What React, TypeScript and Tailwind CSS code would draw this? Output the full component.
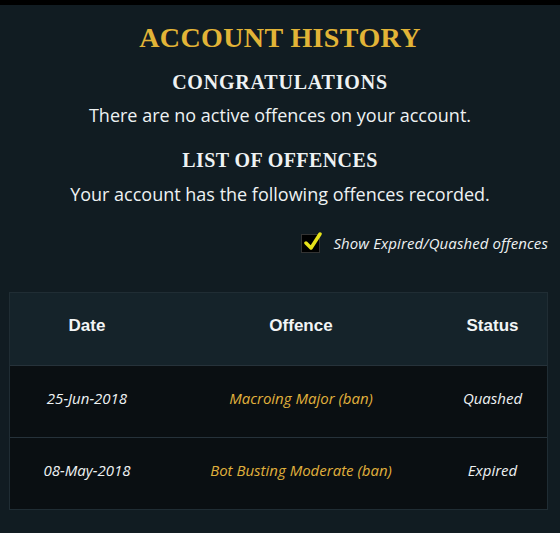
const offences = [
  { date: '25-Jun-2018', offence: 'Macroing Major (ban)', status: 'Quashed' },
  { date: '08-May-2018', offence: 'Bot Busting Moderate (ban)', status: 'Expired' },
];

export default function App() {
  return (
    <div className="min-h-[533px] w-[560px] bg-[#111c22] border-t-[5px] border-black font-['Open_Sans',sans-serif] text-[#eef2f3]">
      <div className="flex flex-col items-center pt-[18px]">
        <h1 className="font-['Liberation_Serif',serif] text-[28px] font-bold leading-[30px] tracking-[0.4px] text-[#e2b437]">
          ACCOUNT HISTORY
        </h1>
        <h2 className="mt-[17px] font-['Liberation_Serif',serif] text-[20px] font-bold leading-[24px] tracking-[0.8px]">
          CONGRATULATIONS
        </h2>
        <p className="mt-[11px] text-[18px] leading-[20px]">There are no active offences on your account.</p>
        <h2 className="mt-[23px] font-['Liberation_Serif',serif] text-[20px] font-bold leading-[24px] tracking-[0.4px]">
          LIST OF OFFENCES
        </h2>
        <p className="mt-[12px] text-[18px] leading-[20px]">Your account has the following offences recorded.</p>
      </div>

      <div className="mt-[28px] flex items-center justify-end pr-[12px]">
        <div className="relative flex h-[19px] w-[19px] items-center justify-center bg-black border border-[#333]">
          <svg viewBox="0 0 20 20" className="absolute -top-[3px] left-[1px] h-[20px] w-[20px]">
            <path d="M3 11 L8 16 L17 2" fill="none" stroke="#e6e21a" strokeWidth="3.5" strokeLinecap="round" strokeLinejoin="round" />
          </svg>
        </div>
        <span className="ml-[13px] text-[15px] italic tracking-[0.1px]">Show Expired/Quashed offences</span>
      </div>

      <div className="mx-[9px] mt-[37px] w-[539px] border border-[#202d34]">
        <div className="grid h-[72px] grid-cols-[154px_274px_1fr] items-center bg-[#15232a] pb-[5px] font-['Liberation_Sans',sans-serif] text-[17px] font-bold text-[#f2f5f6]">
          <div className="text-center">Date</div>
          <div className="text-center">Offence</div>
          <div className="text-center">Status</div>
        </div>
        {offences.map((o) => (
          <div
            key={o.date}
            className="grid h-[72px] grid-cols-[154px_274px_1fr] items-center border-t border-[#26323a] bg-[#0a0f12] pb-[5px] text-[15px] italic"
          >
            <div className="text-center">{o.date}</div>
            <div className="text-center text-[#e0b13c]">{o.offence}</div>
            <div className="text-center">{o.status}</div>
          </div>
        ))}
      </div>
    </div>
  );
}
